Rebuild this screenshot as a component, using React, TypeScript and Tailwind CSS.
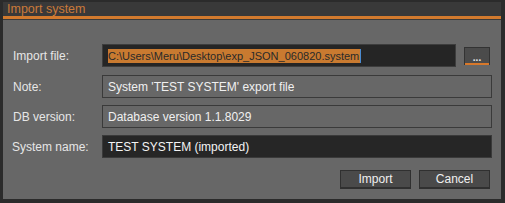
import React from "react";

const font = { fontFamily: '"Liberation Sans", Arial, sans-serif' };

function Label({ children }: { children: React.ReactNode }) {
  return <div className="w-[99px] pl-[10px] text-[12px] text-[#e6e6e6]">{children}</div>;
}

export default function App() {
  return (
    <div className="w-[505px] h-[203px] bg-[#2b2b2b] pt-[2px] pl-[3px] pr-[4px] pb-[4px] flex flex-col" style={font}>
      {/* Title */}
      <div className="h-[14px] bg-[#393939] flex items-center pl-[4px]">
        <span className="text-[12.5px] leading-none text-[#c97a3a]">Import system</span>
      </div>
      <div className="h-[3px] bg-[#d27a2e]" />
      <div className="h-[1px] bg-[#3a3a3a]" />

      {/* Body */}
      <div className="flex-1 bg-[#676767] flex flex-col pt-[24px]">
        <div className="flex items-center h-[23px]">
          <Label>Import file:</Label>
          <div className="w-[354px] h-[23px] bg-[#252525] border border-[#3d3d3d] flex items-center pl-[5px]">
            <span className="text-[11px] leading-[14px] bg-[#c97a30] text-[#2a2a2a] pr-[1px] border-r border-[#4a8ad0]">
              C:\Users\Meru\Desktop\exp_JSON_060820.system
            </span>
          </div>
          <div className="ml-[8px] w-[26px] h-[18px] bg-[#4b4b4b] border border-[#333] border-b-0 flex flex-col">
            <div className="flex-1 flex items-end justify-center text-[10px] leading-[9px] text-[#e8e8e8] font-bold">...</div>
            <div className="h-[2px] bg-[#d8782a] mt-[1px]" />
          </div>
        </div>

        <div className="flex items-center h-[23px] mt-[8px]">
          <Label>Note:</Label>
          <div className="w-[390px] h-[23px] border border-[#3a3a3a] flex items-center pl-[5px] text-[12px] text-[#f0f0f0]">
            System 'TEST SYSTEM' export file
          </div>
        </div>

        <div className="flex items-center h-[23px] mt-[7px]">
          <Label>DB version:</Label>
          <div className="w-[390px] h-[23px] border border-[#3a3a3a] flex items-center pl-[5px] text-[12px] text-[#f0f0f0]">
            Database version 1.1.8029
          </div>
        </div>

        <div className="flex items-center h-[23px] mt-[7px]">
          <div className="w-[99px] pl-[9px] text-[12px] text-[#e6e6e6]">System name:</div>
          <div className="w-[390px] h-[23px] bg-[#262626] border border-[#3a3a3a] flex items-center pl-[5px] text-[12px] text-[#f4f4f4]">
            TEST SYSTEM (imported)
          </div>
        </div>

        <div className="flex justify-end gap-[8px] mt-[12px] pr-[11px]">
          <button className="w-[71px] h-[19px] bg-[#4a4a4a] border border-[#303030] border-b-2 text-[12px] leading-none text-[#f0f0f0]">
            Import
          </button>
          <button className="w-[71px] h-[19px] bg-[#4a4a4a] border border-[#303030] border-b-2 text-[12px] leading-none text-[#f0f0f0]">
            Cancel
          </button>
        </div>
      </div>
    </div>
  );
}
